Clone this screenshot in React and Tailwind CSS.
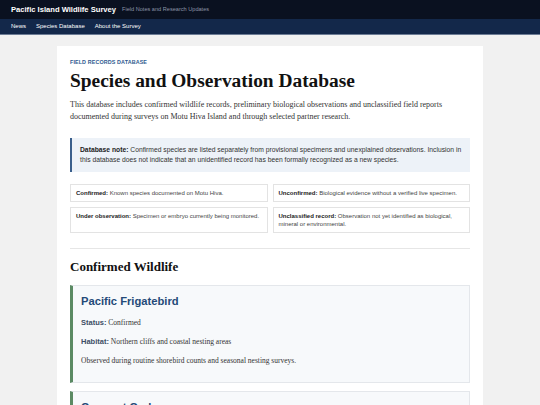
import React from "react";

const LEGEND = [
  { label: "Confirmed:", text: "Known species documented on Motu Hiva." },
  { label: "Unconfirmed:", text: "Biological evidence without a verified live specimen." },
  { label: "Under observation:", text: "Specimen or embryo currently being monitored." },
  { label: "Unclassified record:", text: "Observation not yet identified as biological, mineral or environmental." },
];

const SPECIES = [
  {
    name: "Pacific Frigatebird",
    status: "Confirmed",
    habitat: "Northern cliffs and coastal nesting areas",
    notes: "Observed during routine shorebird counts and seasonal nesting surveys.",
  },
  {
    name: "Coconut Crab",
    status: "Confirmed",
    habitat: "Inland palm groves and rocky shoreline",
    notes: "Recorded at night near survey camps.",
  },
];

export default function App() {
  return (
    <div className="min-h-screen bg-[#f1f1f1] font-['Liberation_Sans',Arial,sans-serif]">
      {/* HEADER */}
      <header className="bg-[#0a1120] h-[19px] flex items-center px-[11px] gap-[6px]">
        <span className="text-white font-bold text-[7.6px]">Pacific Island Wildlife Survey</span>
        <span className="text-[#8a94a6] text-[5.6px]">Field Notes and Research Updates</span>
      </header>
      <nav className="bg-[#13284a] h-[16px] flex items-center px-[11px] gap-[10px] border-b border-[#6c7c95]">
        <span className="text-white text-[6px]">News</span>
        <span className="text-white text-[6px]">Species Database</span>
        <span className="text-white text-[6px]">About the Survey</span>
      </nav>

      {/* MAIN CARD */}
      <main className="pt-[11px] px-[57px]">
        <div className="bg-white px-[13px] pt-[12px] pb-[20px]">
          <div className="text-[5.4px] font-bold uppercase text-[#2f5a8f] tracking-[0.02em]">Field Records Database</div>
          <h1 className="font-['Liberation_Serif',serif] font-bold text-[19.4px] text-[#111] mt-[3px] leading-tight">
            Species and Observation Database
          </h1>
          <p className="font-['Liberation_Serif',serif] text-[8px] leading-[12px] text-[#333] mt-[6px]">
            This database includes confirmed wildlife records, preliminary biological observations and unclassified field reports
            documented during surveys on Motu Hiva Island and through selected partner research.
          </p>

          <div className="mt-[15px] bg-[#edf2f8] border-l-[2px] border-[#3a5f8c] pl-[8px] pr-[2px] py-[7px] text-[6.75px] leading-[10px] text-[#333]">
            <b className="text-[#222]">Database note:</b> Confirmed species are listed separately from provisional specimens and unexplained observations. Inclusion in
            <br />
            this database does not indicate that an unidentified record has been formally recognized as a new species.
          </div>

          <div className="mt-[12px] grid grid-cols-2 gap-[5px]">
            {LEGEND.map((l) => (
              <div key={l.label} className="border border-[#e3e3e3] px-[5px] py-[4px] text-[6px] leading-[8px] text-[#444]">
                <b className="text-[#222]">{l.label}</b> {l.text}
              </div>
            ))}
          </div>

          <hr className="mt-[15px] border-t border-[#e6e6e6]" />

          <h2 className="font-['Liberation_Serif',serif] font-bold text-[13px] leading-[16px] text-[#111] mt-[10px]">Confirmed Wildlife</h2>

          <div className="mt-[10px] flex flex-col gap-[8px]">
            {SPECIES.map((s) => (
              <div key={s.name} className="bg-[#f7f9fb] border border-[#e4e7eb] border-l-[3px] border-l-[#5b8a63] pl-[8px] pr-[10px] pt-[9px] pb-[15px]">
                <h3 className="text-[11.2px] leading-[13px] font-bold text-[#244a78]">{s.name}</h3>
                <div className="font-['Liberation_Serif',serif] text-[7.5px] leading-[12px] text-[#333]">
                  <p className="mt-[9px]">
                    <b className="font-['Liberation_Sans',sans-serif] text-[#3d4f66]">Status:</b> {s.status}
                  </p>
                  <p className="mt-[7px]">
                    <b className="font-['Liberation_Sans',sans-serif] text-[#3d4f66]">Habitat:</b> {s.habitat}
                  </p>
                  <p className="mt-[7px]">{s.notes}</p>
                </div>
              </div>
            ))}
          </div>
        </div>
      </main>
    </div>
  );
}
